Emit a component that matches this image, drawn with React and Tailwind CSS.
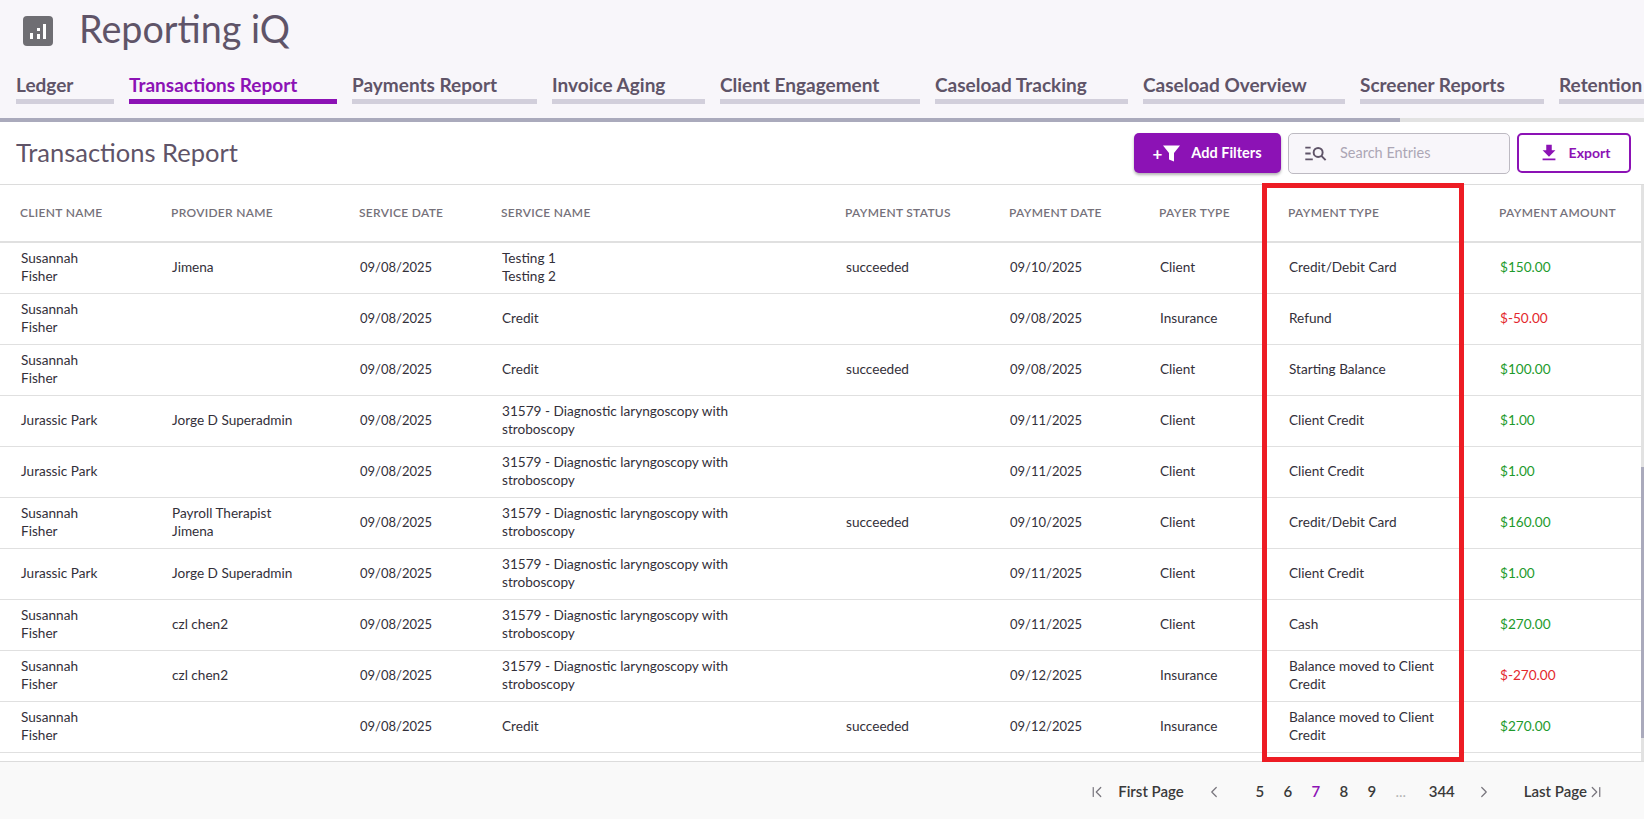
import { ChevronFirst, ChevronLast, ChevronLeft, ChevronRight } from "lucide-react";
import { MdFileDownload } from "react-icons/md";

const TABS = [
  { label: "Ledger", width: "w-[98px]" },
  { label: "Transactions Report", width: "w-[208px]", active: true },
  { label: "Payments Report", width: "w-[185px]" },
  { label: "Invoice Aging", width: "w-[153px]" },
  { label: "Client Engagement", width: "w-[200px]" },
  { label: "Caseload Tracking", width: "w-[193px]" },
  { label: "Caseload Overview", width: "w-[202px]" },
  { label: "Screener Reports", width: "w-[184px]" },
  { label: "Retention", width: "w-[120px]" },
];

const COLUMNS = [
  { label: "Client Name", width: "w-[151px]" },
  { label: "Provider Name", width: "w-[188px]" },
  { label: "Service Date", width: "w-[142px]" },
  { label: "Service Name", width: "w-[344px]" },
  { label: "Payment Status", width: "w-[164px]" },
  { label: "Payment Date", width: "w-[150px]" },
  { label: "Payer Type", width: "w-[129px]" },
  { label: "Payment Type", width: "w-[211px]" },
  { label: "Payment Amount", width: "w-[162px]" },
];

const SF = "Susannah\nFisher";
const JP = "Jurassic Park";
const LARYNX = "31579 - Diagnostic laryngoscopy with\nstroboscopy";
const MOVED = "Balance moved to Client\nCredit";

const ROWS = [
  [SF, "Jimena", "09/08/2025", "Testing 1\nTesting 2", "succeeded", "09/10/2025", "Client", "Credit/Debit Card", "$150.00"],
  [SF, "", "09/08/2025", "Credit", "", "09/08/2025", "Insurance", "Refund", "$-50.00"],
  [SF, "", "09/08/2025", "Credit", "succeeded", "09/08/2025", "Client", "Starting Balance", "$100.00"],
  [JP, "Jorge D Superadmin", "09/08/2025", LARYNX, "", "09/11/2025", "Client", "Client Credit", "$1.00"],
  [JP, "", "09/08/2025", LARYNX, "", "09/11/2025", "Client", "Client Credit", "$1.00"],
  [SF, "Payroll Therapist\nJimena", "09/08/2025", LARYNX, "succeeded", "09/10/2025", "Client", "Credit/Debit Card", "$160.00"],
  [JP, "Jorge D Superadmin", "09/08/2025", LARYNX, "", "09/11/2025", "Client", "Client Credit", "$1.00"],
  [SF, "czl chen2", "09/08/2025", LARYNX, "", "09/11/2025", "Client", "Cash", "$270.00"],
  [SF, "czl chen2", "09/08/2025", LARYNX, "", "09/12/2025", "Insurance", MOVED, "$-270.00"],
  [SF, "", "09/08/2025", "Credit", "succeeded", "09/12/2025", "Insurance", MOVED, "$270.00"],
];

function AppIcon() {
  return (
    <svg width="30" height="30" viewBox="0 0 30 30" className="shrink-0">
      <rect x="0" y="0" width="30" height="30" rx="4" fill="#6f6e73" />
      <rect x="7" y="17" width="3" height="6" fill="#fff" />
      <rect x="14" y="12" width="3" height="3" fill="#fff" />
      <rect x="14" y="18" width="3" height="5" fill="#fff" />
      <rect x="20" y="8" width="3" height="15" fill="#fff" />
    </svg>
  );
}

function FilterIcon() {
  return (
    <svg width="17" height="17" viewBox="0 0 17 17" fill="#fff">
      <path d="M0 0.5h17l-6 7.5v8.5l-5-2v-6.5z" />
    </svg>
  );
}

function SearchListIcon() {
  return (
    <svg width="22" height="15" viewBox="0 0 20 14" fill="none" stroke="#5f5468" strokeWidth="1.8">
      <path d="M0 1.5h5M0 7h5M0 12.5h7" />
      <circle cx="12" cy="6" r="4.2" />
      <path d="M15 9.2l4 4" />
    </svg>
  );
}

// ─── Top bar with title and tabs ─────────────────────────────────────
function Header() {
  return (
    <header className="bg-[#f8f6fa] shrink-0">
      <div className="flex items-center h-[61px] pl-[23px] pt-[1px]">
        <AppIcon />
        <h1 className="ml-[26px] mb-[4px] text-[37.7px] leading-none text-[#5f5468]">Reporting iQ</h1>
      </div>
      <nav className="flex gap-[15px] pl-4 h-[43px] overflow-hidden whitespace-nowrap">
        {TABS.map(tab => (
          <div key={tab.label} className={`${tab.width} shrink-0 pt-[11px]`}>
            <div className={`h-[27px] leading-[26px] text-[19px] font-bold ${tab.active ? "text-[#8c12b5]" : "text-[#5f5468]"}`}>
              {tab.label}
            </div>
            <div className={`h-[5px] ${tab.active ? "bg-[#8c12b5]" : "bg-[#d2cfdb]"}`} />
          </div>
        ))}
      </nav>
      <div className="h-[14px]" />
      <div className="h-[4px] bg-[#e2e2e2]">
        <div className="h-full w-[1400px] bg-[#aaaabc]" />
      </div>
    </header>
  );
}

function Toolbar() {
  return (
    <div className="flex items-center justify-between h-[63px] pl-4 pr-[13px] border-b border-[#dcdcdc] shrink-0">
      <h2 className="mb-[2px] text-[25.5px] text-[#5f5468]">Transactions Report</h2>
      <div className="flex items-center gap-[7px]">
        <button className="flex items-center justify-center w-[147px] h-[40px] rounded-[5px] bg-[#8c12b5] text-white text-[14.5px] font-bold shadow-[0_2px_3px_rgba(0,0,0,0.3)]">
          <span className="text-[17px] leading-none mr-[1px]">+</span>
          <FilterIcon />
          <span className="ml-[11px] mr-[1px]">Add Filters</span>
        </button>
        <div className="flex items-center w-[222px] h-[41px] pl-[16px] rounded-[5px] border border-[#bdbac2] bg-[#f8f6fa]">
          <SearchListIcon />
          <span className="ml-[13px] text-[14.5px] text-[#aca6b5]">Search Entries</span>
        </div>
        <button className="flex items-center justify-center w-[114px] h-[40px] rounded-[5px] border-2 border-[#8c12b5] text-[#8c12b5] text-[14px] font-bold">
          <MdFileDownload size={22} />
          <span className="ml-[9px] mb-[1px]">Export</span>
        </button>
      </div>
    </div>
  );
}

function AmountCell({ value }) {
  const color = value.startsWith("$-") ? "text-[#e3272c]" : "text-[#1e9a2c]";
  return <span className={color}>{value}</span>;
}

function DataTable() {
  return (
    <table className="w-full table-fixed border-collapse">
      <colgroup>
        {COLUMNS.map(col => <col key={col.label} className={col.width} />)}
      </colgroup>
      <thead>
        <tr className="h-[57px] border-b-2 border-[#e0e0e0]">
          {COLUMNS.map(col => (
            <th key={col.label} className="pl-5 text-left text-[12px] font-semibold tracking-[0.3px] uppercase text-[#75717a]">
              {col.label}
            </th>
          ))}
        </tr>
      </thead>
      <tbody>
        {ROWS.map((row, i) => (
          <tr key={i} className="h-[51px] border-b border-[#e0e0e0]">
            {row.map((cell, j) => (
              <td
                key={j}
                className={`pl-[21px] pb-[1px] leading-[18px] text-[#33303a] whitespace-pre-line ${j === 2 || j === 5 ? "text-[13px]" : "text-[13.6px]"}`}
              >
                {j === 8 ? <AmountCell value={cell} /> : cell}
              </td>
            ))}
          </tr>
        ))}
      </tbody>
    </table>
  );
}

function Pagination() {
  const pages = ["5", "6", "7", "8", "9"];
  return (
    <footer className="flex items-center justify-end h-[58px] pr-[39px] pt-[2px] bg-[#f9f9f9] border-t border-[#dcdcdc] shrink-0 text-[15px] font-semibold text-[#3a3a3a]">
      <ChevronFirst size={18} strokeWidth={1.6} className="text-[#77747c]" />
      <span className="ml-[12px]">First Page</span>
      <ChevronLeft size={18} strokeWidth={1.6} className="ml-[21px] text-[#77747c]" />
      <div className="flex ml-[23px]">
        {pages.map(p => (
          <span key={p} className={`w-[28px] text-center ${p === "7" ? "text-[#8c12b5]" : ""}`}>{p}</span>
        ))}
      </div>
      <span className="w-[30px] text-center text-[#b5b5b5] font-normal">...</span>
      <span className="ml-[8px] w-[36px] text-center">344</span>
      <ChevronRight size={18} strokeWidth={1.6} className="ml-[15px] text-[#77747c]" />
      <span className="ml-[31px]">Last Page</span>
      <ChevronLast size={18} strokeWidth={1.6} className="text-[#77747c]" />
    </footer>
  );
}

export default function App() {
  return (
    <div className="relative flex flex-col h-[819px] overflow-hidden bg-white font-['Lato',sans-serif]">
      <Header />
      <Toolbar />
      <div className="flex flex-1 min-h-0">
        <div className="flex-1 min-w-0 overflow-hidden">
          <DataTable />
        </div>
        {/* Scrollbar */}
        <div className="w-[3px] bg-[#e2e2e2] pt-[282px]">
          <div className="h-[271px] bg-[#aaaabc]" />
        </div>
      </div>
      <Pagination />
      {/* Highlight box drawn over the Payment Type column */}
      <div className="absolute left-[1262px] top-[183px] w-[202px] h-[579px] border-[5px] border-[#ed1c24]" />
    </div>
  );
}
